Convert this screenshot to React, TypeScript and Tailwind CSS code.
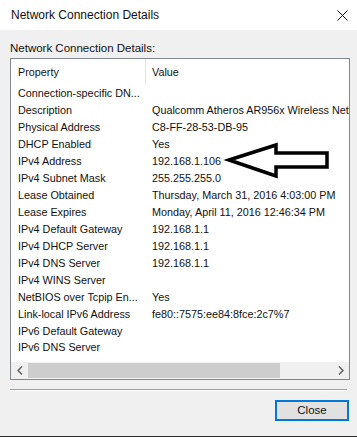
const rows: [string, string][] = [
  ['Connection-specific DN...', ''],
  ['Description', 'Qualcomm Atheros AR956x Wireless Network Adapter'],
  ['Physical Address', 'C8-FF-28-53-DB-95'],
  ['DHCP Enabled', 'Yes'],
  ['IPv4 Address', '192.168.1.106'],
  ['IPv4 Subnet Mask', '255.255.255.0'],
  ['Lease Obtained', 'Thursday, March 31, 2016 4:03:00 PM'],
  ['Lease Expires', 'Monday, April 11, 2016 12:46:34 PM'],
  ['IPv4 Default Gateway', '192.168.1.1'],
  ['IPv4 DHCP Server', '192.168.1.1'],
  ['IPv4 DNS Server', '192.168.1.1'],
  ['IPv4 WINS Server', ''],
  ['NetBIOS over Tcpip En...', 'Yes'],
  ['Link-local IPv6 Address', 'fe80::7575:ee84:8fce:2c7%7'],
  ['IPv6 Default Gateway', ''],
  ['IPv6 DNS Server', ''],
];

export default function App() {
  return (
    <div
      className="relative w-[357px] h-[437px] flex flex-col bg-[#f0f0f0] text-[10.8px] text-[#111] border-b border-[#2b2b2b] overflow-hidden"
      style={{ fontFamily: '"Liberation Sans", Arial, sans-serif' }}
    >
      {/* title bar */}
      <div className="h-[30px] bg-white flex items-center justify-between pl-[11px] pr-[9px] shrink-0">
        <span className="text-[12px]">Network Connection Details</span>
        <svg width="11" height="11" viewBox="0 0 11 11">
          <path d="M0.5 0.5 L10.5 10.5 M10.5 0.5 L0.5 10.5" stroke="#111" strokeWidth="1" />
        </svg>
      </div>

      <div className="pl-[10px] pt-[11px] h-[28px] leading-[14px] text-[11.5px] shrink-0">Network Connection Details:</div>

      {/* list box */}
      <div className="ml-[10px] w-[340px] h-[322px] border border-[#828790] bg-white flex flex-col shrink-0">
        <div className="h-[26px] flex items-center shrink-0">
          <div className="w-[135px] pl-[7px] h-full flex items-center border-r border-[#e5e5e5]">Property</div>
          <div className="pl-[6px]">Value</div>
        </div>
        <div className="flex-1 overflow-hidden">
          {rows.map(([k, v]) => (
            <div key={k} className="h-[16.95px] flex items-center whitespace-nowrap">
              <div className="w-[135px] pl-[7px] shrink-0">{k}</div>
              <div className="pl-[6px]">{v}</div>
            </div>
          ))}
        </div>
        <div className="h-[17px] flex items-center bg-[#f0f0f0] shrink-0">
          <div className="w-[17px] flex items-center justify-center">
            <svg width="6" height="9" viewBox="0 0 6 9">
              <path d="M5 0.5 L1 4.5 L5 8.5" fill="none" stroke="#606060" strokeWidth="1.5" />
            </svg>
          </div>
          <div className="w-[252px] h-[15px] bg-[#cdcdcd]" />
          <div className="flex-1" />
          <div className="w-[17px] flex items-center justify-center">
            <svg width="6" height="9" viewBox="0 0 6 9">
              <path d="M1 0.5 L5 4.5 L1 8.5" fill="none" stroke="#606060" strokeWidth="1.5" />
            </svg>
          </div>
        </div>
      </div>

      {/* separator */}
      <div className="ml-[10px] mt-[9px] w-[337px] h-[2px] border-t border-[#a0a0a0] border-b-white border-b shrink-0" />

      <div className="flex justify-end pr-[8px] mt-[9px]">
        <button className="w-[74px] h-[21px] bg-[#e1e1e1] border-2 border-[#0078d7] text-[11.5px] leading-none">
          Close
        </button>
      </div>

      {/* hand-drawn arrow */}
      <svg className="absolute left-0 top-0 pointer-events-none" width="357" height="437">
        <path
          d="M229 160 L276 145 L276 153 L327 153 L327 167 L276 167 L276 176 Z"
          fill="white"
          stroke="black"
          strokeWidth="3.5"
          strokeLinejoin="miter"
        />
      </svg>
    </div>
  );
}
